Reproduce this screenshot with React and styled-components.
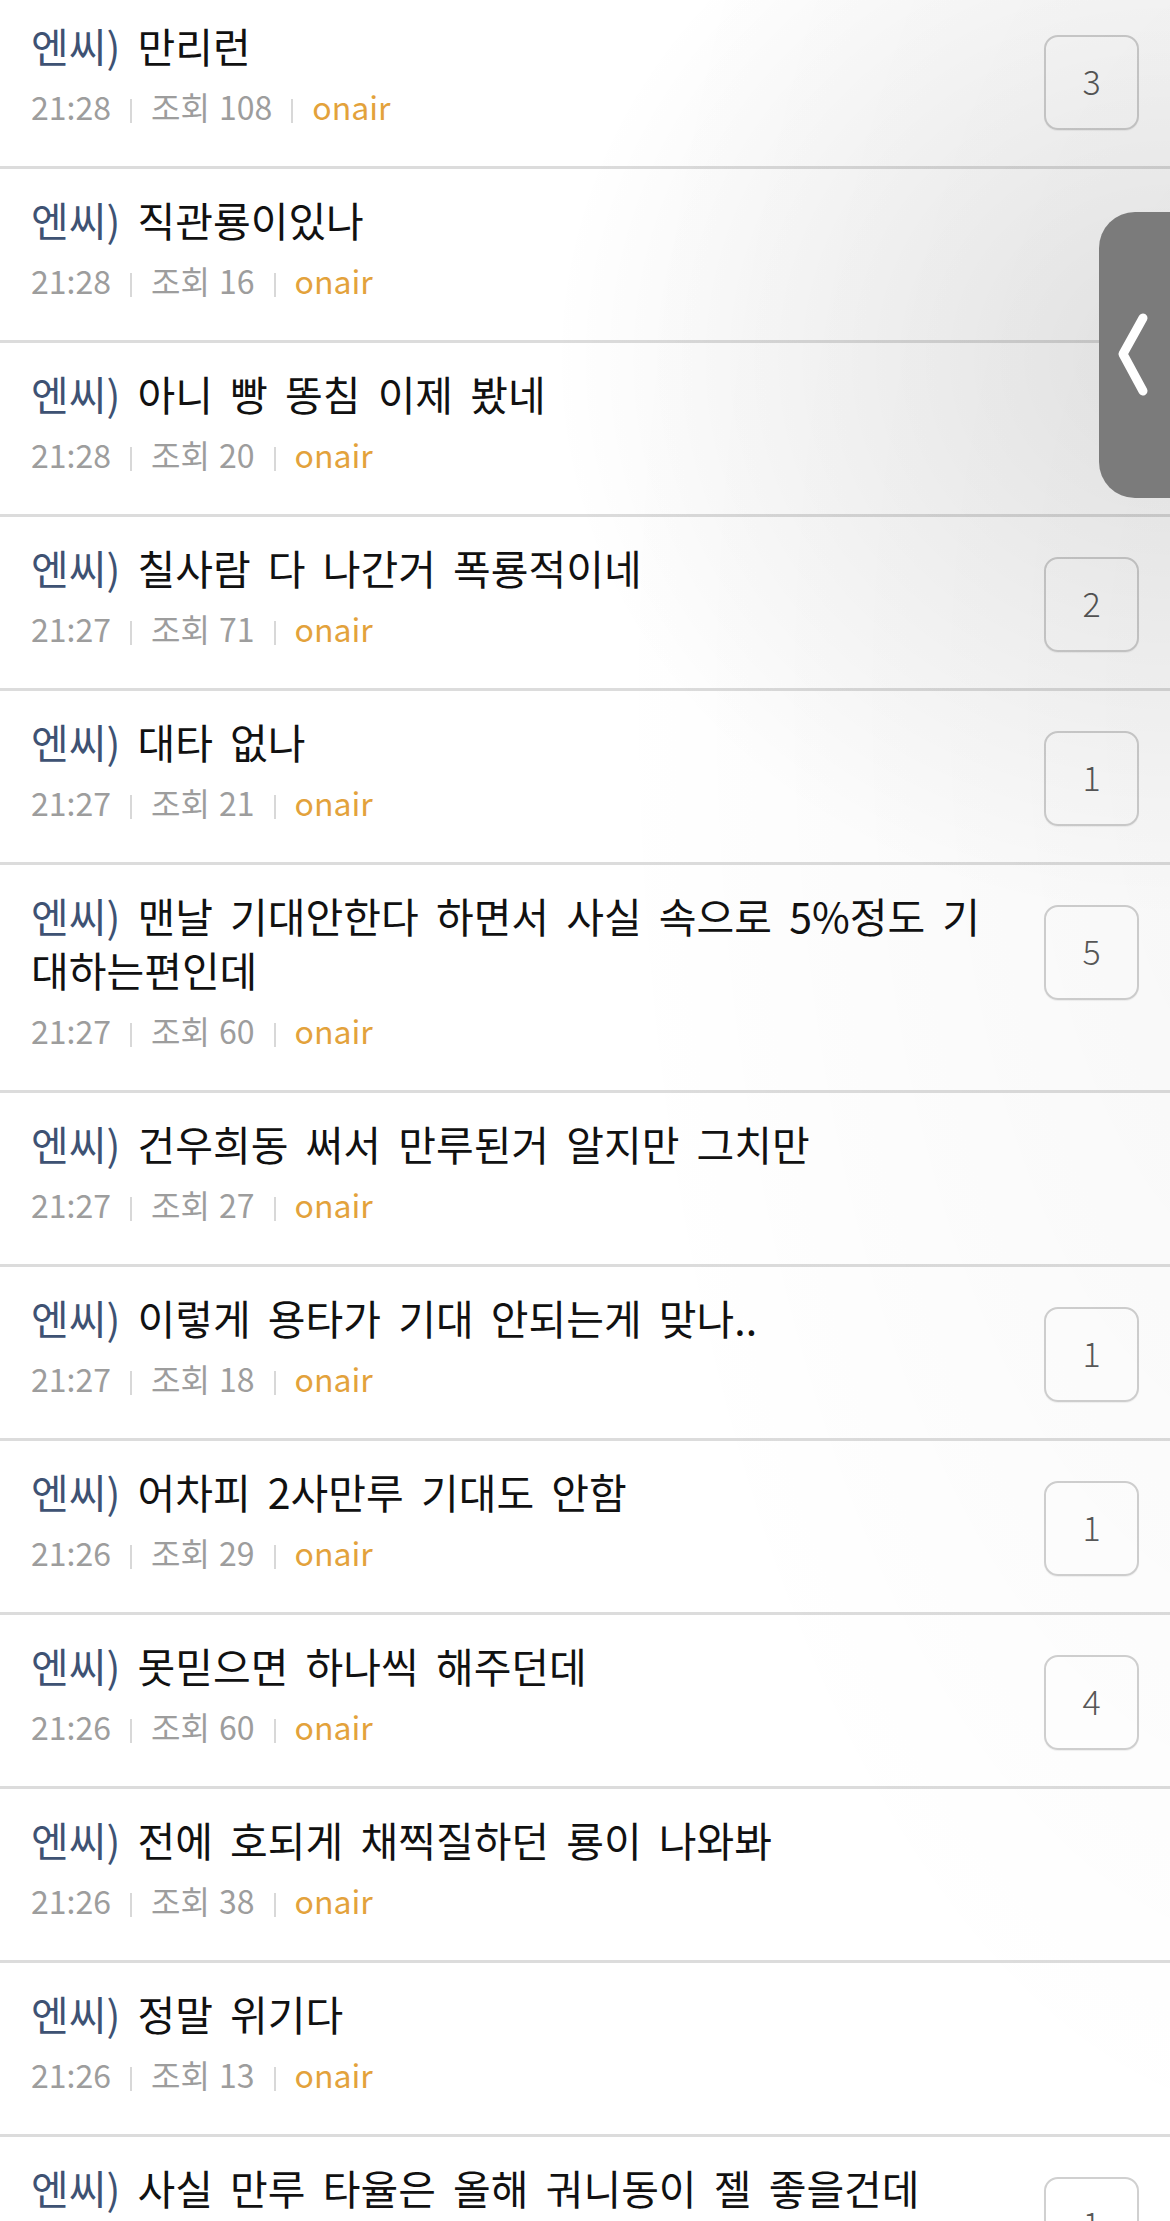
import React from 'react';
import styled, { createGlobalStyle } from 'styled-components';

const GlobalStyle = createGlobalStyle`
  html, body {
    margin: 0;
    padding: 0;
    background: #ffffff;
  }
  body {
    font-family: "Noto Sans CJK KR", "Noto Sans", sans-serif;
    -webkit-font-smoothing: antialiased;
  }
`;

const Page = styled.div`
  position: relative;
  width: 1170px;
  height: 2221px;
  overflow: hidden;
  background: #ffffff;
`;

const List = styled.ul`
  list-style: none;
  margin: -5px 0 0;
  padding: 0;
`;

const Row = styled.li`
  display: grid;
  grid-template-columns: 1fr 95px;
  column-gap: 40px;
  align-items: start;
  padding: 23px 31px 36px;
  border-bottom: 3px solid #dcdcdc;
`;

const Body = styled.div`
  display: flex;
  flex-direction: column;
  gap: 14px;
  min-width: 0;
`;

const Title = styled.div`
  font-size: 41px;
  line-height: 54px;
  color: #111111;
  word-spacing: 8px;
`;

const Head = styled.span`
  color: #3e5273;
`;

const Meta = styled.div`
  display: flex;
  align-items: flex-start;
  height: 44px;
  font-size: 32px;
  line-height: 40px;
  color: #9d9d9d;
  word-spacing: 2px;
`;

const Divider = styled.span`
  display: inline-block;
  width: 2px;
  height: 24px;
  margin: 13px 19px 0;
  background: #d8d8d8;
`;

const Board = styled.span`
  color: #e3a23b;
`;

const Badge = styled.div`
  display: flex;
  align-items: center;
  justify-content: center;
  box-sizing: border-box;
  width: 95px;
  height: 95px;
  margin-top: 17px;
  border: 2.5px solid #d0d0d0;
  border-radius: 14px;
  box-shadow: 0 1px 1px rgba(0, 0, 0, 0.06);
  font-size: 34px;
  font-weight: 300;
  color: #585858;
  padding-bottom: 4px;
`;

const Shade = styled.div`
  position: absolute;
  inset: 0;
  pointer-events: none;
  background:
    radial-gradient(ellipse 620px 560px at 1170px 360px, rgba(0, 0, 0, 0.1), rgba(0, 0, 0, 0) 100%),
    radial-gradient(ellipse 700px 1500px at 1300px 700px, rgba(0, 0, 0, 0.035), rgba(0, 0, 0, 0) 100%);
`;

const SideTab = styled.div`
  position: absolute;
  top: 212px;
  right: 0;
  width: 71px;
  height: 286px;
  background: #7b7b7b;
  border-radius: 36px 0 0 36px;
  display: flex;
  align-items: center;
  justify-content: flex-start;

  svg {
    display: block;
  }
`;

const posts = [
  { title: '만리런', time: '21:28', views: 108, comments: 3 },
  { title: '직관룡이있나', time: '21:28', views: 16 },
  { title: '아니 빵 똥침 이제 봤네', time: '21:28', views: 20 },
  { title: '칠사람 다 나간거 폭룡적이네', time: '21:27', views: 71, comments: 2 },
  { title: '대타 없나', time: '21:27', views: 21, comments: 1 },
  { title: '맨날 기대안한다 하면서 사실 속으로 5%정도 기대하는편인데', time: '21:27', views: 60, comments: 5 },
  { title: '건우희동 써서 만루된거 알지만 그치만', time: '21:27', views: 27 },
  { title: '이렇게 용타가 기대 안되는게 맞나..', time: '21:27', views: 18, comments: 1 },
  { title: '어차피 2사만루 기대도 안함', time: '21:26', views: 29, comments: 1 },
  { title: '못믿으면 하나씩 해주던데', time: '21:26', views: 60, comments: 4 },
  { title: '전에 호되게 채찍질하던 룡이 나와봐', time: '21:26', views: 38 },
  { title: '정말 위기다', time: '21:26', views: 13 },
  { title: '사실 만루 타율은 올해 궈니동이 젤 좋을건데', time: '21:26', views: 15, comments: 1 },
];

function Post({ title, time, views, comments }) {
  return (
    <Row>
      <Body>
        <Title>
          <Head>엔씨)</Head> {title}
        </Title>
        <Meta>
          <span>{time}</span>
          <Divider />
          <span>조회 {views}</span>
          <Divider />
          <Board>onair</Board>
        </Meta>
      </Body>
      {comments ? <Badge>{comments}</Badge> : <span />}
    </Row>
  );
}

export default function App() {
  return (
    <Page>
      <GlobalStyle />
      <List>
        {posts.map((p, i) => (
          <Post key={i} {...p} />
        ))}
      </List>
      <Shade />
      <SideTab>
        <svg width="71" height="286" viewBox="0 0 71 286">
          <polyline
            points="44,106 24,142 44,179"
            fill="none"
            stroke="#ffffff"
            strokeWidth="9"
            strokeLinecap="round"
            strokeLinejoin="round"
          />
        </svg>
      </SideTab>
    </Page>
  );
}
